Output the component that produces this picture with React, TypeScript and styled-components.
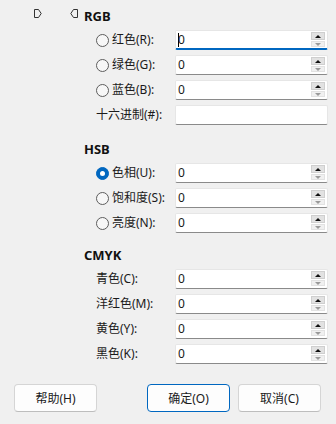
import styled, { createGlobalStyle } from "styled-components";

const GlobalStyle = createGlobalStyle`
  html, body {
    margin: 0;
    padding: 0;
    background: #f0f0f0;
  }
  body {
    font-family: "Noto Sans", "Noto Sans CJK SC", sans-serif;
    font-size: 12px;
    color: #1a1a1a;
  }
`;

const Dialog = styled.div`
  width: 336px;
  height: 424px;
  background: #f0f0f0;
  display: flex;
  flex-direction: column;
  box-sizing: border-box;
`;

const Body = styled.div`
  display: grid;
  grid-template-columns: 84px 1fr;
`;

const SliderColumn = styled.div`
  padding: 9px 0 0 34px;
`;

const SliderArrows = styled.div`
  width: 44px;
  display: flex;
  justify-content: space-between;
`;

const Fields = styled.div`
  display: flex;
  flex-direction: column;
  padding-top: 8px;
`;

const Section = styled.section<{ $gap?: number }>`
  display: flex;
  flex-direction: column;
  gap: 5px;
  margin-top: ${(p) => p.$gap ?? 0}px;
`;

const Heading = styled.div`
  font-weight: 700;
  font-size: 13px;
  line-height: 16px;
  height: 16px;
  margin-bottom: 1px;
  color: #111;
`;

const Row = styled.div`
  display: grid;
  grid-template-columns: 91px 153px;
  height: 20px;
  align-items: center;
`;

const Label = styled.label`
  display: flex;
  align-items: center;
  gap: 3px;
  padding-left: 12px;
  white-space: nowrap;
  line-height: 16px;
`;

const Radio = styled.span<{ $checked?: boolean }>`
  width: 13px;
  height: 13px;
  box-sizing: border-box;
  border-radius: 50%;
  flex-shrink: 0;
  border: 1px solid ${(p) => (p.$checked ? "#0067c0" : "#5d5d5d")};
  background: ${(p) => (p.$checked ? "#0067c0" : "#f7f7f7")};
  display: flex;
  align-items: center;
  justify-content: center;
  &::after {
    content: "";
    display: ${(p) => (p.$checked ? "block" : "none")};
    width: 5px;
    height: 5px;
    border-radius: 50%;
    background: #fff;
  }
`;

const Field = styled.div<{ $focused?: boolean }>`
  height: 20px;
  box-sizing: border-box;
  background: #fff;
  border: 1px solid #e6e6e6;
  border-bottom: ${(p) => (p.$focused ? "2px solid #0067c0" : "1px solid #8a8a8a")};
  border-radius: 2px;
  display: flex;
  align-items: flex-start;
`;

const Value = styled.span`
  flex: 1;
  padding-left: 2px;
  line-height: 18px;
  font-size: 12px;
  display: flex;
  align-items: center;
`;

const Caret = styled.span`
  width: 1px;
  height: 14px;
  background: #000;
  margin-right: -1px;
`;

const Spinner = styled.div`
  display: flex;
  flex-direction: column;
  gap: 1px;
  margin: 1px 2px 0 0;
`;

const SpinButton = styled.span<{ $disabled?: boolean }>`
  width: 14px;
  height: ${(p) => (p.$disabled ? 6 : 8)}px;
  box-sizing: border-box;
  background: ${(p) => (p.$disabled ? "#f0f0f0" : "#e2e2e2")};
  border: 1px solid ${(p) => (p.$disabled ? "#e2e2e2" : "#cfcfcf")};
  display: flex;
  align-items: center;
  justify-content: center;
`;

const Buttons = styled.div`
  display: flex;
  align-items: center;
  gap: 8px;
  padding: 0 15px 0 14px;
  margin-top: 20px;
`;

const Button = styled.button<{ $primary?: boolean }>`
  width: 83px;
  height: 28px;
  box-sizing: border-box;
  border-radius: 4px;
  background: #fdfdfd;
  border: 1px solid ${(p) => (p.$primary ? "#0067c0" : "#d5d5d5")};
  border-bottom-color: ${(p) => (p.$primary ? "#0067c0" : "#bdbdbd")};
  font-family: "Noto Sans", "Noto Sans CJK SC", sans-serif;
  font-size: 12px;
  color: #1a1a1a;
  padding: 0;
  &:first-child {
    margin-right: auto;
  }
`;

function Marker({ flip }: { flip?: boolean }) {
  return (
    <svg width="8" height="9" viewBox="0 0 8 9" style={{ transform: flip ? "scaleX(-1)" : undefined }}>
      <polygon points="0.5,0.5 4.5,0.5 7.2,4.5 4.5,8.5 0.5,8.5" fill="none" stroke="#333" strokeWidth="1" />
    </svg>
  );
}

function Spin() {
  return (
    <Spinner>
      <SpinButton>
        <svg width="6" height="3" viewBox="0 0 6 3">
          <polygon points="0,3 3,0 6,3" fill="#111" />
        </svg>
      </SpinButton>
      <SpinButton $disabled>
        <svg width="6" height="3" viewBox="0 0 6 3">
          <polygon points="0,0 6,0 3,3" fill="#9a9a9a" />
        </svg>
      </SpinButton>
    </Spinner>
  );
}

type FieldDef = { label: string; radio?: boolean; checked?: boolean; value?: string; focused?: boolean; spin?: boolean };

function FieldRow({ f }: { f: FieldDef }) {
  return (
    <Row>
      <Label>
        {f.radio && <Radio $checked={f.checked} />}
        {f.label}
      </Label>
      <Field $focused={f.focused}>
        <Value>
          {f.focused && <Caret />}
          {f.value}
        </Value>
        {f.spin !== false && <Spin />}
      </Field>
    </Row>
  );
}

const rgb: FieldDef[] = [
  { label: "红色(R):", radio: true, value: "0", focused: true },
  { label: "绿色(G):", radio: true, value: "0" },
  { label: "蓝色(B):", radio: true, value: "0" },
  { label: "十六进制(#):", value: "", spin: false },
];

const hsb: FieldDef[] = [
  { label: "色相(U):", radio: true, checked: true, value: "0" },
  { label: "饱和度(S):", radio: true, value: "0" },
  { label: "亮度(N):", radio: true, value: "0" },
];

const cmyk: FieldDef[] = [
  { label: "青色(C):", value: "0" },
  { label: "洋红色(M):", value: "0" },
  { label: "黄色(Y):", value: "0" },
  { label: "黑色(K):", value: "0" },
];

export default function App() {
  return (
    <>
      <GlobalStyle />
      <Dialog>
        <Body>
          <SliderColumn>
            <SliderArrows>
              <Marker />
              <Marker flip />
            </SliderArrows>
          </SliderColumn>
          <Fields>
            <Section>
              <Heading>RGB</Heading>
              {rgb.map((f) => <FieldRow key={f.label} f={f} />)}
            </Section>
            <Section $gap={16}>
              <Heading>HSB</Heading>
              {hsb.map((f) => <FieldRow key={f.label} f={f} />)}
            </Section>
            <Section $gap={14}>
              <Heading>CMYK</Heading>
              {cmyk.map((f) => <FieldRow key={f.label} f={f} />)}
            </Section>
          </Fields>
        </Body>
        <Buttons>
          <Button>帮助(H)</Button>
          <Button $primary>确定(O)</Button>
          <Button>取消(C)</Button>
        </Buttons>
      </Dialog>
    </>
  );
}
